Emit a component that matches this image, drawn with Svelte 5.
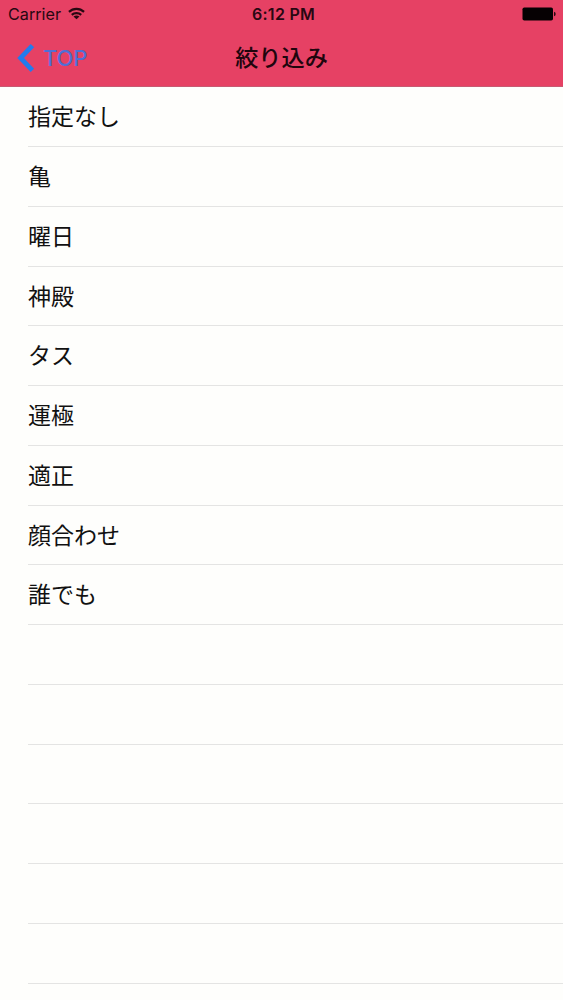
<script>
  const items = ['指定なし', '亀', '曜日', '神殿', 'タス', '運極', '適正', '顔合わせ', '誰でも'];
  const rows = Array.from({ length: 16 }, (_, i) => items[i] ?? '');
</script>

<div class="screen">
  <header>
    <div class="status">
      <div class="carrier">
        <span>Carrier</span>
        <svg width="17" height="13" viewBox="0 0 18 13" fill="none" stroke="#280812" stroke-width="2.3">
          <path d="M1 4.8C5.5 .5 12.5 .5 17 4.8" />
          <path d="M4 8C6.8 5.5 11.2 5.5 14 8" />
          <path d="M9 12.6L5.8 9.8Q9 7.4 12.2 9.8Z" fill="#280812" stroke="none" />
        </svg>
      </div>
      <span class="time">6:12 PM</span>
      <svg class="battery" width="34" height="14" viewBox="0 0 34 14">
        <rect x="0.5" y="0.5" width="30.5" height="13" rx="1.8" fill="#060103" />
        <path d="M32 4.7Q33.7 5.2 33.7 7T32 9.3Z" fill="#280812" />
      </svg>
    </div>
    <nav>
      <div class="back">
        <svg width="19" height="30" viewBox="0 0 19 30" fill="none" stroke="#237bed" stroke-width="4.8">
          <path d="M16.4 2.7L4.6 15L16.4 27.3" />
        </svg>
        <span>TOP</span>
      </div>
      <h1>絞り込み</h1>
    </nav>
  </header>
  <ul>
    {#each rows as label}
      <li><span>{label}</span></li>
    {/each}
  </ul>
</div>

<style>
  :global(body) {
    margin: 0;
    overflow: hidden;
  }
  .screen {
    height: 1000px;
    overflow: hidden;
    background: #fefefc;
    font-family: Inter, 'Noto Sans CJK JP', sans-serif;
    color: #111;
  }
  header {
    box-sizing: border-box;
    height: 87.4px;
    background: #e64164;
    border-bottom: 1px solid #c75a72;
  }
  .status {
    display: grid;
    grid-template-columns: 1fr auto 1fr;
    align-items: center;
    height: 28px;
    padding: 0 7px 0 8px;
    color: #280812;
    font-size: 16px;
    line-height: 28px;
  }
  .carrier {
    display: flex;
    align-items: center;
    gap: 7px;
  }
  .carrier svg {
    margin-bottom: 1px;
  }
  .carrier span {
    font-size: 16.2px;
  }
  .time {
    padding-left: 3px;
    font-size: 16px;
    font-weight: 600;
    letter-spacing: 0.25px;
  }
  .battery {
    justify-self: end;
  }
  nav {
    display: grid;
    grid-template-columns: 1fr auto 1fr;
    align-items: center;
    height: 59px;
    padding: 0 16px;
  }
  .back {
    display: flex;
    align-items: center;
    gap: 8px;
    color: #506fd6;
    font-size: 22px;
    font-weight: 500;
    letter-spacing: -0.2px;
  }
  h1 {
    margin: 0;
    color: #20050d;
    font-size: 23.2px;
    font-weight: 500;
    line-height: 30px;
  }
  ul {
    list-style: none;
    margin: 0;
    padding: 0 0 0 28px;
  }
  li {
    box-sizing: border-box;
    height: 59.75px;
    border-bottom: 1px solid #e4e4e3;
    font-size: 23px;
    line-height: 61px;
  }
</style>
